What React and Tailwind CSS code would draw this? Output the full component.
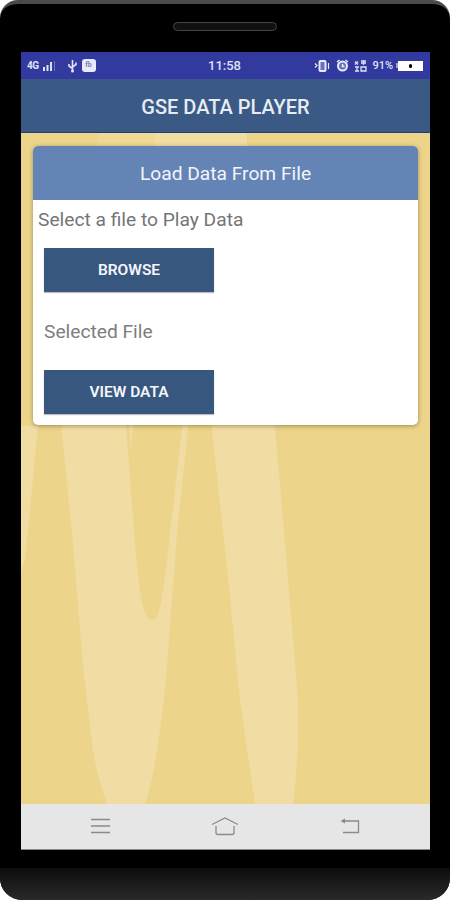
import React from "react";

// wavy lighter shapes behind the card
function Waves() {
  return (
    <svg className="absolute inset-0 w-full h-full" viewBox="0 0 409 671" preserveAspectRatio="none">
      <path fill="#eed893" d="M77 0h57v13H77z" />
      <path fill="#f1dda3" d="M134 0h92v13h-92z" />
      <path fill="#f1dda3" d="M0 293 L18 293 L17 295 C12 340 8 390 4 427 L0 440 Z" />
      <path fill="#f1dda3" d="M39 280 L168 280 L167 295 L156 400 L146 534 C143 570 139 600 136 617 C133 640 128 660 124 671 L86 671 C80 655 75 635 72 617 L62 534 L51 400 Z" />
      <path fill="#ecd48b" d="M104 280 L162 280 L161 295 L149 400 C146 430 143 455 139 474 C137 483 134 487 131 487 C128 487 125 483 122 474 C117 450 114 410 112 384 Z" />
      <path fill="#f1dda3" d="M107 280 L113 280 L110 316 Z" />
      <path fill="#f1dda3" d="M189 280 L253 280 L254 295 L266 434 L277 567 C278 610 275 650 272 671 L234 671 L219 567 L206 434 Z" />
    </svg>
  );
}

function StatusBar() {
  return (
    <div className="h-[27px] bg-[#333a9f] flex items-center pl-[6px] pr-[7px] text-[#dfe3f5] font-['Roboto',sans-serif]">
      <div className="w-[180px] flex items-center">
        <span className="text-[10px] font-bold tracking-[-0.5px]">4G</span>
        <svg className="ml-[3px]" width="14" height="10" viewBox="0 0 14 10">
          <path fill="#dfe3f5" d="M1 6h2v4H1zM4.500 4h2v6h-2zM8 1h2v9H8z" />
          <path fill="#6f74bd" d="M12 0h1v10h-1z" />
        </svg>
        <svg className="ml-[11px]" width="11" height="14" viewBox="0 0 11 14">
          <path stroke="#dfe3f5" strokeWidth="1.600" fill="none" d="M5.500 1v12M2 5v2l3.500 2.500M9 3.500v2L5.500 8" />
          <circle cx="5.500" cy="12" r="1.500" fill="#dfe3f5" />
        </svg>
        <div className="ml-[4px] w-[14px] h-[13px] rounded-[3px] bg-[#e8ebf8] flex items-center justify-center text-[7px] font-bold text-[#7b80c0]">
          fb
        </div>
      </div>
      <span className="w-[35px] text-[13px] font-medium text-center leading-none">11:58</span>
      <div className="flex-1 flex items-center justify-end">
        <svg width="16" height="12" viewBox="0 0 16 12">
          <rect x="5.500" y="1" width="6" height="10" rx="1" fill="#e8ebf8" fillOpacity="0.3" stroke="#e8ebf8" strokeWidth="2" />
          <path stroke="#e8ebf8" strokeWidth="1.200" d="M1 3.500l2 2-2 2M14.500 3v6" fill="none" />
        </svg>
        <svg className="ml-[6px]" width="13" height="13" viewBox="0 0 13 13">
          <circle cx="6.500" cy="7" r="4.500" fill="#e8ebf8" fillOpacity="0.3" stroke="#e8ebf8" strokeWidth="2" />
          <path stroke="#e8ebf8" strokeWidth="1.500" d="M1 3l2.500-2M12 3L9.500 1M6.500 5v2.500h2" fill="none" />
        </svg>
        <svg className="ml-[5px]" width="13" height="12" viewBox="0 0 13 12">
          <path stroke="#dfe3f5" strokeWidth="1.300" fill="none" d="M1 1.500l3 3M4 1.500l-3 3M7 1h5M9.500 1v4M7 3h5M1 7h4M3 7v4M1 11h4M7 7h5v4H7z" />
        </svg>
        <span className="ml-[5px] text-[11px] font-medium leading-none">91%</span>
        <div className="ml-[3px] w-[2px] h-[5px] bg-[#9da1d6]" />
        <div className="w-[25px] h-[10px] bg-white flex items-center justify-center">
          <div className="w-[3px] h-[4px] rounded-full bg-black" />
        </div>
      </div>
    </div>
  );
}

function NavBar() {
  return (
    <div className="h-[46px] bg-[#e6e6e6] flex items-center justify-between pl-[70px] pr-[70px] pb-[1px] border-b border-[#888]">
      <svg width="19" height="16" viewBox="0 0 19 16">
        <path stroke="#8a8a8a" strokeWidth="1.300" d="M0 1.500h19M0 8h19M0 14.500h19" />
      </svg>
      <svg width="28" height="19" viewBox="0 0 28 19">
        <path stroke="#8a8a8a" strokeWidth="1.300" fill="none" d="M1 7.500L14 1l13 6.500M5 9v6.500a2 2 0 0 0 2 2h14a2 2 0 0 0 2-2V9" />
      </svg>
      <svg width="20" height="16" viewBox="0 0 20 16">
        <path stroke="#8a8a8a" strokeWidth="1.300" fill="none" d="M3 3h15.500v11.500H3" />
        <path fill="#8a8a8a" d="M0.500 3L5 0.500v5z" />
      </svg>
    </div>
  );
}

function ActionButton({ children }) {
  return (
    <button className="w-[170px] h-[44px] pt-[2px] bg-[#38577f] shadow-[0_1px_1px_rgba(0,0,0,0.25)] text-[#f4f6fa] text-[15.5px] font-semibold">
      {children}
    </button>
  );
}

export default function App() {
  return (
    <div className="w-[450px] h-[900px] bg-white overflow-hidden font-['Roboto',sans-serif]">
      <div className="h-full bg-black rounded-t-[18px] rounded-b-[22px] overflow-hidden flex flex-col border-t-[4px] border-[#4a4a4a]">
        {/* speaker */}
        <div className="h-[48px] flex justify-center pt-[18px] shrink-0">
          <div className="w-[104px] h-[9px] rounded-full border border-[#444] bg-[#111]" />
        </div>

        {/* screen */}
        <div className="ml-[21px] w-[409px] h-[798px] flex flex-col shrink-0">
          <StatusBar />
          <div className="h-[54px] pt-[2px] bg-[#3a5a85] border-b border-[#1d3f73] flex items-center justify-center text-[20px] font-medium text-[#e6ecf4] shrink-0">
            GSE DATA PLAYER
          </div>

          <div className="relative flex-1 bg-[#ecd48b] pl-[12px] pr-[12px] pt-[13px]">
            <Waves />
            <div className="relative bg-white rounded-[5px] overflow-hidden shadow-[0_1px_4px_rgba(90,70,20,0.5)] h-[279px]">
              <div className="h-[54px] pt-[2px] bg-[#6484b5] flex items-center justify-center text-[19.2px] text-[#f2f5fa]">
                Load Data From File
              </div>
              <div className="pl-[5px] pt-[9px] text-[19.2px] leading-[21px] text-[#757575]">
                Select a file to Play Data
              </div>
              <div className="pl-[11px] pt-[18px]">
                <ActionButton>BROWSE</ActionButton>
              </div>
              <div className="pl-[11px] pt-[29px] text-[19.2px] leading-[21px] text-[#7d7d7d]">
                Selected File
              </div>
              <div className="pl-[11px] pt-[28px]">
                <ActionButton>VIEW DATA</ActionButton>
              </div>
            </div>
          </div>

          <NavBar />
        </div>

        {/* chin */}
        <div className="mt-[18px] flex-1 bg-gradient-to-b from-[#0d0d0d] to-[#2a2a2a]" />
      </div>
    </div>
  );
}
